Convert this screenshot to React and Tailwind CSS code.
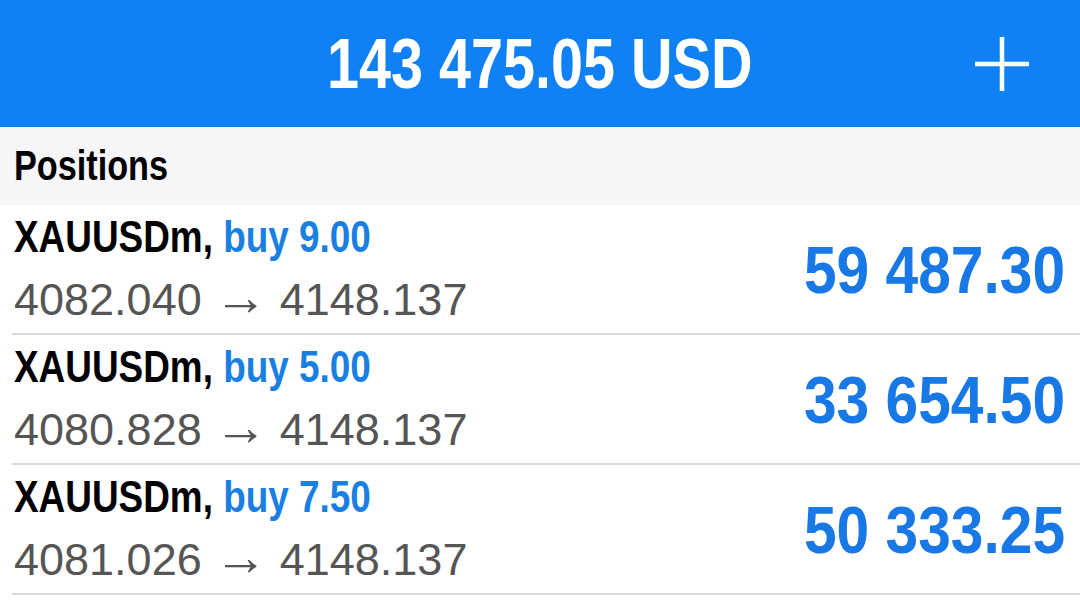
import React from 'react';

const positions = [
  { symbol: 'XAUUSDm', side: 'buy', volume: '9.00', open: '4082.040', current: '4148.137', profit: '59 487.30' },
  { symbol: 'XAUUSDm', side: 'buy', volume: '5.00', open: '4080.828', current: '4148.137', profit: '33 654.50' },
  { symbol: 'XAUUSDm', side: 'buy', volume: '7.50', open: '4081.026', current: '4148.137', profit: '50 333.25' },
];

const sans = "font-['Liberation_Sans','Helvetica_Neue',Arial,sans-serif]";

const PositionRow = ({ item }) => (
  <div className="flex items-center justify-between h-[130px] ml-[12px] pl-[2px] pr-[15px] border-b-2 border-[#dadada]">
    <div className="self-start pt-[6px] flex flex-col">
      <div className="leading-[52px]">
        <span className={`${sans} inline-block origin-left scale-x-[0.82] font-bold text-[45px] text-black whitespace-nowrap`}>
          {item.symbol}, <span className="text-[#1a7fe2]">{item.side} {item.volume}</span>
        </span>
      </div>
      <div className={`${sans} mt-[2px] text-[45px] leading-[52px] text-[#555555] whitespace-nowrap`}>
        {item.open} <span className="text-[53px] leading-[0]">→</span> {item.current}
      </div>
    </div>
    <div>
      <span className={`${sans} inline-block origin-right scale-x-[0.876] font-bold text-[67px] leading-none text-[#1878e6] whitespace-nowrap`}>
        {item.profit}
      </span>
    </div>
  </div>
);

const App = () => {
  return (
    <div className="w-[1080px] h-[608px] overflow-hidden bg-white">
      {/* saldo da conta */}
      <div className="h-[127px] bg-[#1080f5] grid grid-cols-[1fr_auto_1fr] items-center">
        <div />
        <h1 className={`${sans} inline-block scale-x-[0.822] font-bold text-[70px] leading-none text-white whitespace-nowrap`}>
          143 475.05 USD
        </h1>
        <div className="flex justify-end pr-[51px]">
          <svg width="54" height="54" viewBox="0 0 54 54">
            <path d="M27 0v54M0 27h54" stroke="white" strokeWidth="4.5" fill="none" />
          </svg>
        </div>
      </div>

      <div className="h-[78px] bg-[#f6f6f8] flex items-center pl-[14px]">
        <h2 className={`${sans} inline-block origin-left scale-x-[0.815] font-bold text-[42px] leading-none text-black`}>
          Positions
        </h2>
      </div>

      <div>
        {positions.map((item, i) => (
          <PositionRow key={i} item={item} />
        ))}
      </div>
    </div>
  );
};

export default App;
